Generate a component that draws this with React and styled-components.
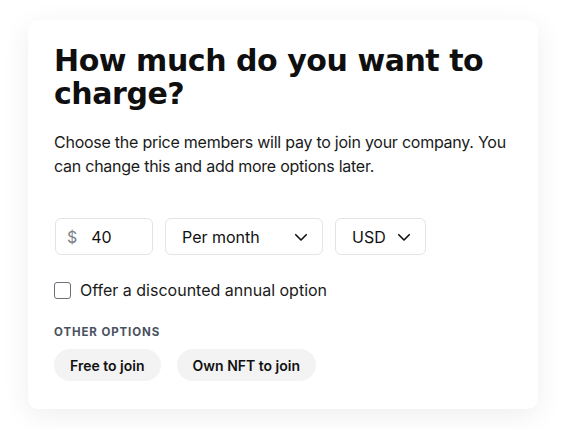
import styled, { createGlobalStyle } from "styled-components";

const GlobalStyle = createGlobalStyle`
  body {
    margin: 0;
    background: #ffffff;
    font-family: Inter, "Noto Sans", sans-serif;
    color: #111111;
  }
  * {
    box-sizing: border-box;
  }
`;

function Chevron() {
  return (
    <svg width="18" height="18" viewBox="0 0 24 24" fill="none">
      <path
        d="M5 9l7 7 7-7"
        stroke="#111"
        strokeWidth="2.2"
        strokeLinecap="round"
        strokeLinejoin="round"
      />
    </svg>
  );
}

function App() {
  return (
    <StPage>
      <GlobalStyle />
      <StCard>
        <StTitle>How much do you want to charge?</StTitle>
        <StDescription>
          Choose the price members will pay to join your company. You can
          change this and add more options later.
        </StDescription>

        <StPriceRow>
          <StField width="98px">
            <StCurrency>$</StCurrency>
            <StValue>40</StValue>
          </StField>
          <StSelect width="158px">
            <span>Per month</span>
            <Chevron />
          </StSelect>
          <StSelect width="91px">
            <span>USD</span>
            <Chevron />
          </StSelect>
        </StPriceRow>

        <StCheckRow>
          <StCheckbox />
          <span>Offer a discounted annual option</span>
        </StCheckRow>

        <StSectionLabel>Other options</StSectionLabel>
        <StPills>
          <StPill>Free to join</StPill>
          <StPill>Own NFT to join</StPill>
        </StPills>
      </StCard>
    </StPage>
  );
}

export default App;

const StPage = styled.div`
  padding: 20px 28px;
`;

const StCard = styled.div`
  width: 510px;
  height: 389px;
  padding: 24px 26px;
  background: #ffffff;
  border-radius: 10px;
  box-shadow: 0 6px 28px rgba(0, 0, 0, 0.07);
`;

const StTitle = styled.h1`
  margin: 0;
  font-family: "DejaVu Sans", Inter, sans-serif;
  font-size: 30px;
  font-weight: 700;
  line-height: 33px;
  letter-spacing: -0.45px;
  color: #0f0f0f;
`;

const StDescription = styled.p`
  margin: 20px 0 0;
  font-size: 16px;
  line-height: 24px;
  letter-spacing: -0.25px;
  color: #1a1a1a;
`;

const StPriceRow = styled.div`
  display: flex;
  gap: 12px;
  margin-top: 40px;
  margin-left: 1px;
`;

const StField = styled.div`
  display: flex;
  align-items: center;
  gap: 14px;
  width: ${(p) => p.width};
  height: 37px;
  padding: 0 11px;
  border: 1px solid #e4e4e4;
  border-radius: 6px;
  font-size: 16px;
`;

const StCurrency = styled.span`
  color: #7a8089;
`;

const StValue = styled.span`
  color: #111;
`;

const StSelect = styled.div`
  display: flex;
  align-items: center;
  justify-content: space-between;
  width: ${(p) => p.width};
  height: 37px;
  padding: 0 12px 0 16px;
  border: 1px solid #e4e4e4;
  border-radius: 6px;
  font-size: 16px;
  color: #111;
`;

const StCheckRow = styled.label`
  display: flex;
  align-items: center;
  gap: 9px;
  margin-top: 25px;
  font-size: 16px;
  color: #1a1a1a;
`;

const StCheckbox = styled.span`
  width: 17px;
  height: 17px;
  border: 1.5px solid #6b7078;
  border-radius: 3px;
`;

const StSectionLabel = styled.div`
  margin-top: 25px;
  font-size: 11.5px;
  font-weight: 700;
  letter-spacing: 0.9px;
  text-transform: uppercase;
  color: #4a5160;
`;

const StPills = styled.div`
  display: flex;
  gap: 16px;
  margin-top: 10px;
`;

const StPill = styled.button`
  height: 32px;
  padding: 0 16px;
  border: none;
  border-radius: 16px;
  background: #f3f3f3;
  font-family: Inter, sans-serif;
  font-size: 14px;
  font-weight: 600;
  color: #111;
`;
